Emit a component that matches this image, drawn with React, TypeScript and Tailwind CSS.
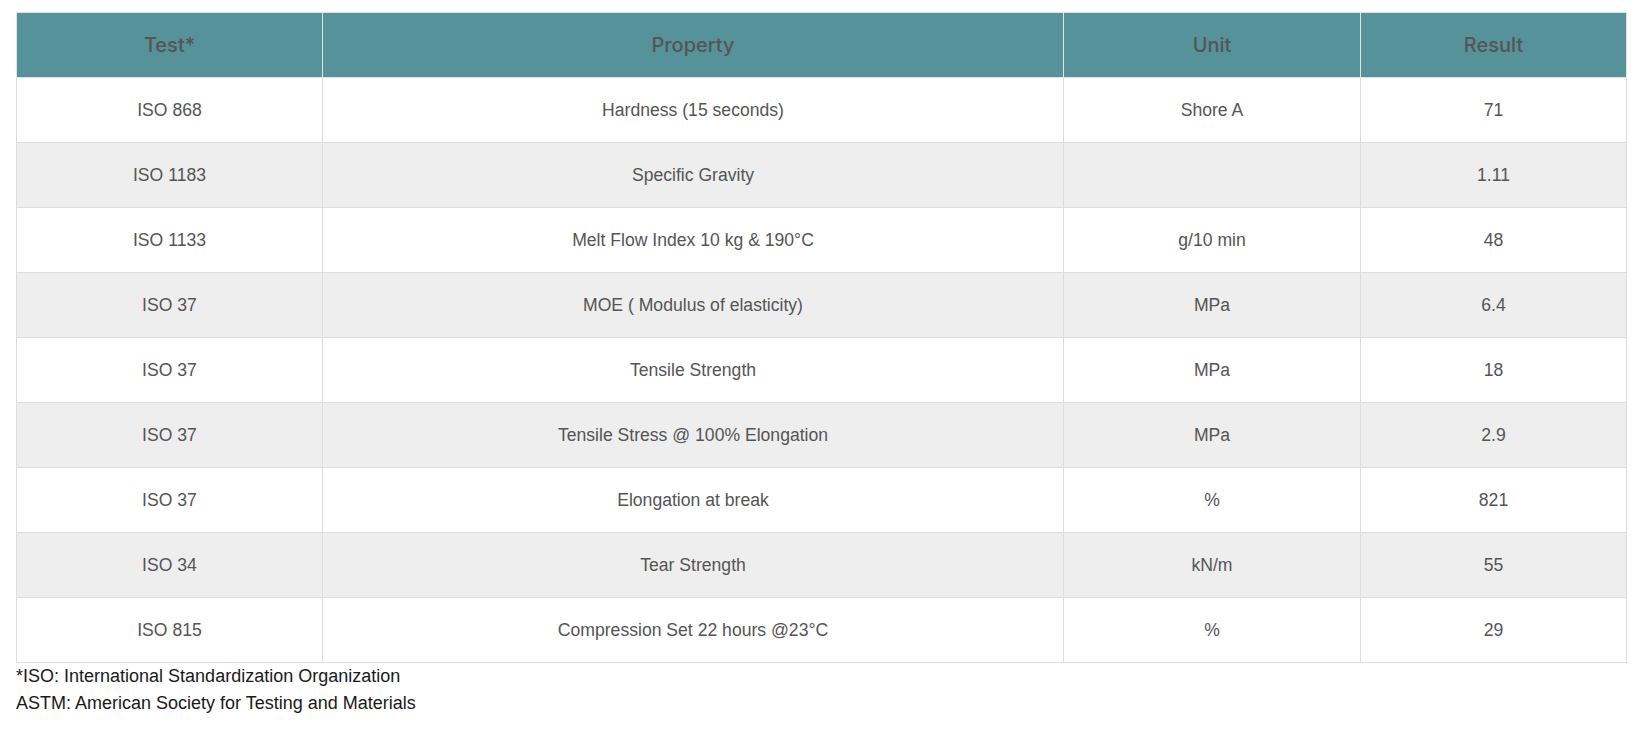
import React from "react";

const rows: [string, string, string, string][] = [
  ["ISO 868", "Hardness (15 seconds)", "Shore A", "71"],
  ["ISO 1183", "Specific Gravity", "", "1.11"],
  ["ISO 1133", "Melt Flow Index 10 kg & 190°C", "g/10 min", "48"],
  ["ISO 37", "MOE ( Modulus of elasticity)", "MPa", "6.4"],
  ["ISO 37", "Tensile Strength", "MPa", "18"],
  ["ISO 37", "Tensile Stress @ 100% Elongation", "MPa", "2.9"],
  ["ISO 37", "Elongation at break", "%", "821"],
  ["ISO 34", "Tear Strength", "kN/m", "55"],
  ["ISO 815", "Compression Set 22 hours @23°C", "%", "29"],
];

export default function App() {
  return (
    <div className="bg-white min-h-[730px] px-4 pt-3 font-['Liberation_Sans',Arial,sans-serif]">
      <table className="w-full table-fixed border-collapse border border-[#dddddd]">
        <colgroup>
          <col className="w-[306px]" />
          <col className="w-[741px]" />
          <col className="w-[297px]" />
          <col className="w-[266px]" />
        </colgroup>
        <thead>
          <tr className="h-[65px] bg-[#56929a]">
            {["Test*", "Property", "Unit", "Result"].map((h) => (
              <th
                key={h}
                className="border border-[#e3e3e3] text-center align-middle font-medium text-[20px] text-[#555555] font-['Inter',sans-serif]"
              >
                {h}
              </th>
            ))}
          </tr>
        </thead>
        <tbody>
          {rows.map((r, i) => (
            <tr key={i} className={`h-[65px] ${i % 2 === 1 ? "bg-[#eeeeee]" : "bg-white"}`}>
              {r.map((c, j) => (
                <td
                  key={j}
                  className="border border-[#dddddd] text-center align-middle text-[17.6px] text-[#555555]"
                >
                  {c}
                </td>
              ))}
            </tr>
          ))}
        </tbody>
      </table>
      <div className="text-[18px] leading-[27px] text-[#1a1a1a]">
        <p>*ISO: International Standardization Organization</p>
        <p>ASTM: American Society for Testing and Materials</p>
      </div>
    </div>
  );
}
